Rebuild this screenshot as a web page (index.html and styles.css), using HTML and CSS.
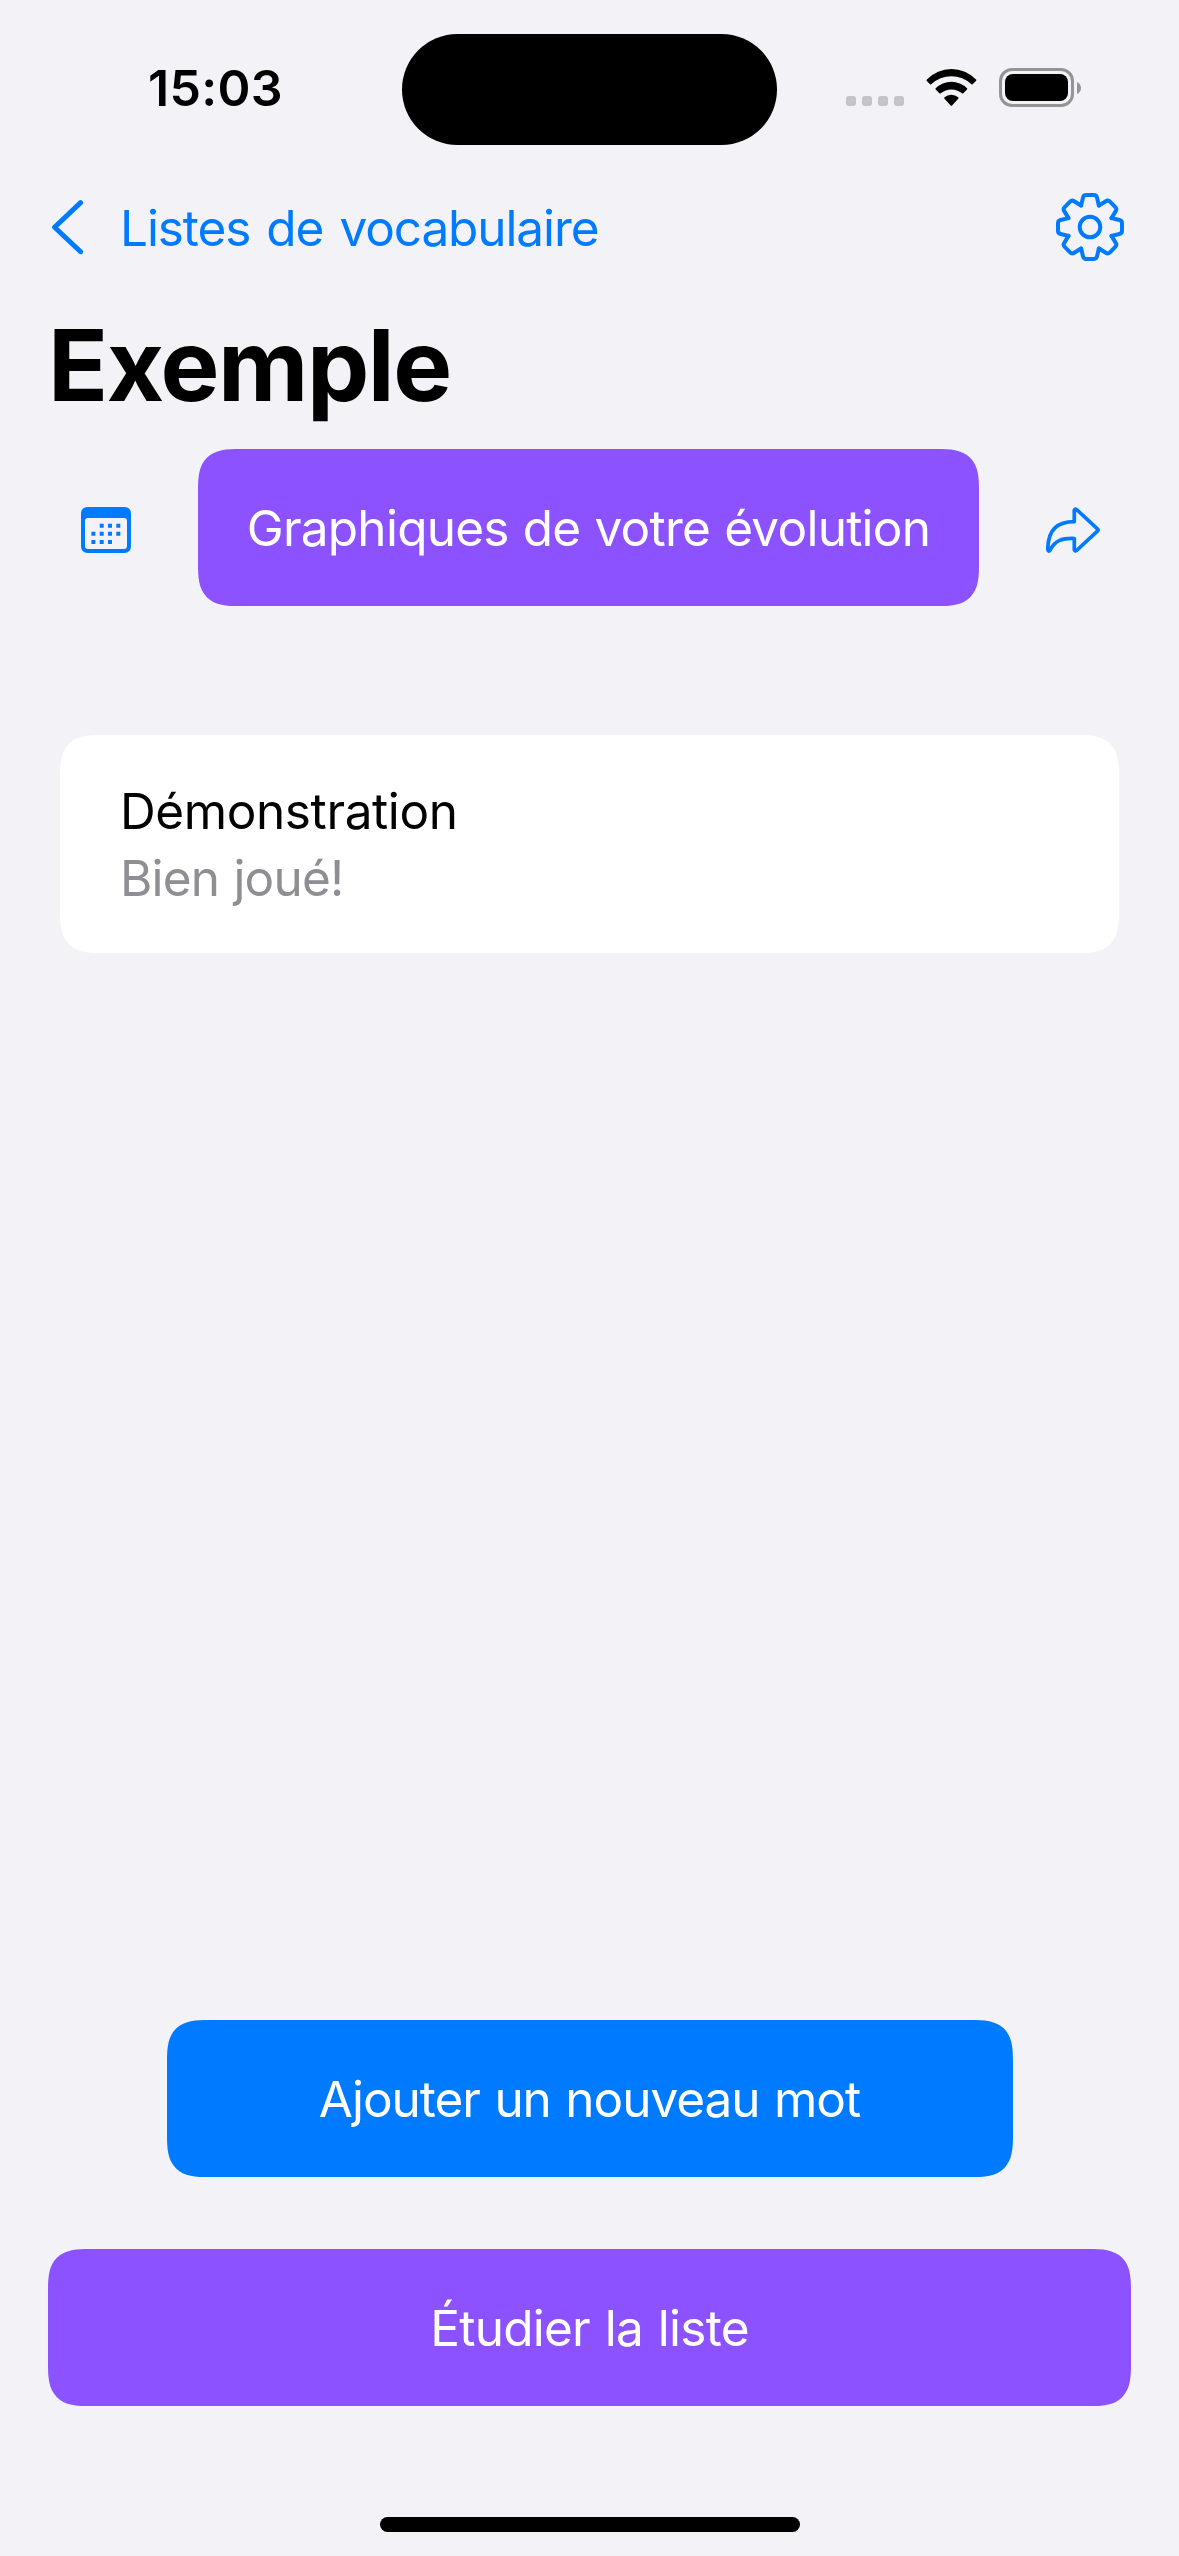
FILE: index.html
```
<!DOCTYPE html>
<html lang="fr">
<head>
<meta charset="utf-8">
<title>Exemple</title>
<link rel="stylesheet" href="styles.css">
</head>
<body>
<div class="screen">
  <header class="status">
    <div class="time">15:03</div>
    <div class="island"></div>
    <div class="indicators">
      <div class="signal"><i></i><i></i><i></i><i></i></div>
      <svg class="wifi" width="51" height="37" viewBox="0 0 51 37">
        <path d="M.9 10.6A34 34 0 0 1 50 10.6Q50.7 11.3 50 12L46.6 15.2Q46 15.7 45.4 15.2A29 29 0 0 0 5.3 15.2Q4.7 15.7 4.1 15.2L.8 12Q.2 11.3 .9 10.6Z"/>
        <path d="M9.7 19.3A22 22 0 0 1 41 19.3Q41.6 20 41 20.6L37.3 24.3Q36.7 24.8 36 24.3A16.5 16.5 0 0 0 14.7 24.3Q14 24.8 13.4 24.3L9.7 20.6Q9.1 20 9.7 19.3Z"/>
        <path d="M18.5 28.3A10.5 10.5 0 0 1 32.2 28.3Q32.9 29 32.2 29.7L26 36.4Q25.35 37 24.7 36.4L18.5 29.7Q17.8 29 18.5 28.3Z"/>
      </svg>
      <div class="battery"><div class="cell"><div class="charge"></div></div>
        <svg width="4" height="12" viewBox="0 0 4 12"><path d="M0 0Q4 2 4 6T0 12Z"/></svg>
      </div>
    </div>
  </header>

  <nav class="nav">
    <a class="back">
      <svg width="34" height="56" viewBox="0 0 34 56"><path d="M29.6 3.6L3.6 28.2L29.6 52.7"/></svg>
      <span class="back-label">Listes de vocabulaire</span>
    </a>
    <svg class="gear" width="70" height="70" viewBox="-35 -35 70 70">
      <defs><path id="tooth" d="M-8.9-21.5L-7-29.4Q-6.4-32-3.8-32H3.8Q6.4-32 7-29.4L8.9-21.5"/></defs>
      <use href="#tooth"/><use href="#tooth" transform="rotate(45)"/><use href="#tooth" transform="rotate(90)"/><use href="#tooth" transform="rotate(135)"/>
      <use href="#tooth" transform="rotate(180)"/><use href="#tooth" transform="rotate(225)"/><use href="#tooth" transform="rotate(270)"/><use href="#tooth" transform="rotate(315)"/>
      <circle r="10.3"/>
    </svg>
  </nav>

  <h1 class="title">Exemple</h1>

  <div class="tools">
    <svg class="calendar" width="50" height="46" viewBox="0 0 50 46">
      <path fill-rule="evenodd" d="M7 0H43Q50 0 50 7V39Q50 46 43 46H7Q0 46 0 39V7Q0 0 7 0ZM7 11Q4 11 4 14V39Q4 42 7 42H43Q46 42 46 39V14Q46 11 43 11Z"/>
      <path d="M18.7 16.7h4v4h-4zM27 16.7h4v4h-4zM35.3 16.7h4v4h-4zM10.4 24.8h4v4h-4zM18.7 24.8h4v4h-4zM27 24.8h4v4h-4zM35.3 24.8h4v4h-4zM10.4 33h4v4h-4zM18.7 33h4v4h-4zM27 33h4v4h-4z"/>
    </svg>
    <button class="btn charts">Graphiques de votre évolution</button>
    <svg class="share" width="54" height="46" viewBox="0 0 54 46">
      <path d="M28.3 14.6V3.4Q28.6 1.3 30.6 2.5L51.4 21.8Q52.6 23 51.4 24.2L30.6 43.5Q28.6 44.7 28.3 42.6V31.5C15 31 9 34 4.4 42.6Q2.4 45.6 1.8 42.5C1.8 22 12 14.6 28.3 14.6Z"/>
    </svg>
  </div>

  <main class="list">
    <div class="word">Démonstration</div>
    <div class="meaning">Bien joué!</div>
  </main>

  <footer class="actions">
    <button class="btn add">Ajouter un nouveau mot</button>
    <button class="btn study">Étudier la liste</button>
    <div class="home"></div>
  </footer>
</div>
</body>
</html>
```
FILE: styles.css
```
* { box-sizing: border-box; margin: 0; }

body {
  background: #f2f2f7;
  color: #000;
  font-family: "Inter", sans-serif;
  font-size: 49.5px;
}

.screen {
  display: flex;
  flex-direction: column;
  width: 1179px;
  height: 2556px;
}

svg { display: block; flex: none; }

/* Status bar */
.status {
  display: grid;
  grid-template-columns: 402px 375px 1fr;
  align-items: center;
  height: 178px;
}
.time {
  padding-left: 148px;
  font-size: 50px;
  font-weight: 600;
  letter-spacing: 0.3px;
  line-height: 60px;
  margin-top: -2px;
}
.island { height: 111px; border-radius: 56px; background: #000; }
.indicators { display: flex; align-items: center; padding-left: 69px; height: 39px; margin-top: -3px; }
.signal { display: flex; gap: 6px; align-self: flex-end; padding-bottom: 1px; }
.signal i { width: 10px; height: 10px; border-radius: 3px; background: #c4c3c8; }
.wifi { margin-left: 22px; }
.battery { display: flex; align-items: center; gap: 3px; margin-left: 22px; }
.battery svg { fill: #949397; }
.cell { width: 75px; height: 39px; padding: 3px; border: 3px solid #949397; border-radius: 13px; }
.charge { height: 27px; border-radius: 8px; background: #000; }

/* Navigation */
.nav {
  display: flex;
  align-items: center;
  justify-content: space-between;
  height: 98px;
  padding: 0 54px 0 51px;
}
.back { display: flex; align-items: center; gap: 35px; color: #007aff; line-height: 60px; }
.back svg, .gear, .share { fill: none; stroke: #007aff; stroke-linecap: round; stroke-linejoin: round; }
.back svg { stroke-width: 5; }
.back-label { padding-top: 2px; letter-spacing: -1.1px; word-spacing: 3.3px; }
.gear { stroke-width: 4; }

.title {
  height: 173px;
  padding: 29px 0 0 48px;
  font-size: 99px;
  font-weight: 700;
  letter-spacing: -1.5px;
  line-height: 120px;
}

/* Toolbar */
.tools { display: flex; align-items: center; padding: 0 79px 0 81px; }
.calendar, .share { margin-top: 5px; }
.calendar { fill: #007aff; }
.share { stroke-width: 3.7; }

.btn, .list { border-radius: 32px; }
@supports (corner-shape: superellipse(1.55)) {
  .btn, .list { border-radius: 42px; corner-shape: superellipse(1.55); }
}
.btn {
  height: 157px;
  padding: 0;
  border: 0;
  background: #8c52ff;
  color: #fff;
  font: inherit;
}
.charts { width: 781px; margin: 0 67px; letter-spacing: -0.75px; word-spacing: 0.9px; }

/* Word list */
.list {
  margin: 129px 60px 0;
  height: 218px;
  padding: 43px 60px;
  background: #fff;
  line-height: 67px;
}
.word { letter-spacing: -0.4px; }
.meaning { color: #8e8e93; letter-spacing: -0.8px; word-spacing: 1px; }

/* Bottom actions */
.actions { display: flex; flex-direction: column; align-items: center; margin-top: auto; }
.add { width: 846px; background: #007aff; letter-spacing: -1.05px; word-spacing: 1.7px; }
.study { width: 1083px; margin-top: 72px; letter-spacing: -0.75px; word-spacing: 1.6px; }
.home { width: 420px; height: 15px; margin: 111px 0 24px; border-radius: 8px; background: #000; }
```
